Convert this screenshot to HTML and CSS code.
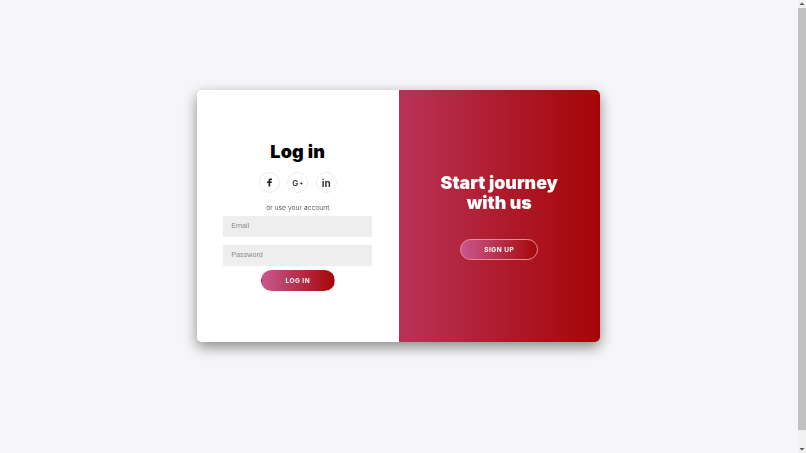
FILE: index.html
```html
<!DOCTYPE html>
<html lang="en">
<head>
<meta charset="utf-8">
<title>Log in</title>
<link rel="stylesheet" href="styles.css">
</head>
<body>
<main class="page">
  <div class="card">
    <form class="login">
      <h1 class="login-title">Log in</h1>
      <div class="socials">
        <a class="social"><svg class="icon-f" viewBox="0 0 10 16" width="5" height="9"><path d="M3 16V9H0V6h3V4c0-2.700 1.600-4 4-4h3v3H8C6.800 3 6.400 3.500 6.400 4.500V6H10l-.5 3H6.400v7z" fill="#222"/></svg></a>
        <a class="social social-g">G<span class="plus">+</span></a>
        <a class="social social-in">in</a>
      </div>
      <p class="hint">or use your account</p>
      <div class="field">Email</div>
      <div class="field field-second">Password</div>
      <button class="btn btn-login" type="button">LOG IN</button>
    </form>
    <section class="promo">
      <h2 class="promo-title">Start journey<br>with us</h2>
      <button class="btn btn-signup" type="button">SIGN UP</button>
    </section>
  </div>
</main>
<aside class="scrollbar">
  <svg class="arrow" viewBox="0 0 8 8" width="8" height="8"><path d="M1.500 5L4 2.500 6.500 5z" fill="#555"/></svg>
  <div class="thumb"></div>
  <div class="track"></div>
  <svg class="arrow" viewBox="0 0 8 8" width="8" height="8"><path d="M1.500 3L4 5.500 6.500 3z" fill="#555"/></svg>
</aside>
</body>
</html>
```
FILE: styles.css
```css
* { box-sizing: border-box; }
html, body { margin: 0; height: 100%; overflow: hidden; }
body {
  display: flex;
  background: #f6f6f8;
  font-family: "Inter", "Liberation Sans", sans-serif;
}
.page {
  flex: 1;
  display: flex;
  justify-content: center;
  padding: 90px 1px 0 0;
}
.card {
  width: 403px;
  height: 252px;
  display: flex;
  border-radius: 5px;
  overflow: hidden;
  background: #fff;
  box-shadow: 0 5px 14px rgba(0, 0, 0, 0.45);
  filter: blur(0.3px);
}
.login {
  width: 201.500px;
  display: flex;
  flex-direction: column;
  align-items: center;
  padding: 51px 0 0;
  background: #fff;
}
.login-title {
  margin: 0;
  font-size: 18px;
  line-height: 22px;
  font-weight: 900;
  color: #000;
  letter-spacing: 0.2px;
}
.socials {
  display: flex;
  gap: 7.500px;
  margin-top: 9px;
}
.social {
  width: 21px;
  height: 21px;
  border: 1px solid #ececec;
  border-radius: 50%;
  display: flex;
  align-items: center;
  justify-content: center;
  color: #333;
  font-size: 8px;
  font-weight: 600;
}
.social-in { font-size: 10px; font-weight: 700; }
.plus { font-size: 6px; margin-left: 1px; }
.hint {
  margin: 10px 0 0;
  font-size: 6.800px;
  line-height: 9px;
  font-weight: 300;
  color: #333;
}
.field {
  width: 149px;
  height: 21px;
  margin-top: 4px;
  padding-left: 8px;
  background: #eee;
  color: #888;
  font-family: "Liberation Sans", sans-serif;
  font-size: 7.200px;
  line-height: 20px;
}
.field-second { margin-top: 8px; }
.btn {
  display: block;
  border-radius: 21px;
  color: #fff;
  font-family: "Inter", sans-serif;
  font-size: 6.500px;
  font-weight: 700;
  letter-spacing: 0.5px;
  background: linear-gradient(to right, #c8578f, #a50808);
  padding: 0;
}
.btn-login {
  width: 74px;
  height: 21px;
  margin-top: 4px;
  border: 1px solid transparent;
}
.promo {
  width: 201.500px;
  display: flex;
  flex-direction: column;
  align-items: center;
  padding-top: 83px;
  background: linear-gradient(to right, #b93357, #a50505);
}
.promo-title {
  margin: 0;
  font-size: 17.800px;
  line-height: 20px;
  font-weight: 900;
  color: #fff;
  text-align: center;
}
.btn-signup {
  width: 78px;
  height: 21px;
  margin-top: 26px;
  border: 1px solid #ef8a9a;
}
.scrollbar {
  width: 8px;
  display: flex;
  flex-direction: column;
  background: #f1f1f1;
}
.arrow { display: block; flex: none; }
.thumb { height: 422px; background: #c1c1c1; flex: none; }
.track { flex: 1; }
```
